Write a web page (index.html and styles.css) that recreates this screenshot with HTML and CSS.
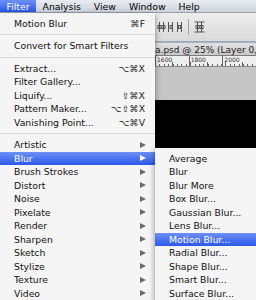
FILE: index.html
```html
<!DOCTYPE html>
<html lang="en">
<head>
    <meta charset="UTF-8">
    <meta name="viewport" content="width=device-width, initial-scale=1.0">
    <title>Filter menu</title>
    <link rel="stylesheet" href="styles.css">
</head>
<body>
    <div id="menubar">
        <span class="mb-item active">Filter</span>
        <span class="mb-item">Analysis</span>
        <span class="mb-item">View</span>
        <span class="mb-item">Window</span>
        <span class="mb-item">Help</span>
    </div>

    <div id="workspace">
        <div class="options-bar">
            <svg class="tool-icon" width="26" height="12" viewBox="0 0 26 12">
                <g stroke="#555" stroke-width="1" fill="none">
                    <line x1="2.5" y1="1" x2="2.5" y2="11"/>
                    <line x1="6.5" y1="1" x2="6.5" y2="11"/>
                    <rect x="1" y="4.5" width="3" height="3"/>
                    <rect x="5" y="4.5" width="3" height="3"/>
                    <line x1="11.5" y1="1" x2="11.5" y2="11"/>
                    <line x1="15.5" y1="1" x2="15.5" y2="11"/>
                    <rect x="13" y="4.5" width="2" height="3"/>
                    <line x1="20.5" y1="1" x2="20.5" y2="11"/>
                    <line x1="24.5" y1="1" x2="24.5" y2="11"/>
                    <rect x="21.5" y="4.5" width="2" height="3"/>
                </g>
            </svg>
            <span class="tool-sep"></span>
            <svg class="tool-icon" width="11" height="12" viewBox="0 0 11 12">
                <g stroke="#555" stroke-width="1" fill="none">
                    <line x1="0.5" y1="1" x2="10.5" y2="1"/>
                    <line x1="3.5" y1="1" x2="3.5" y2="11"/>
                    <line x1="7.5" y1="1" x2="7.5" y2="11"/>
                    <rect x="2" y="4.5" width="3" height="3"/>
                    <rect x="6" y="4.5" width="3" height="3"/>
                    <line x1="0.5" y1="11" x2="10.5" y2="11"/>
                </g>
            </svg>
        </div>
        <div class="doc-title"><span>a.psd @ 25% (Layer 0, R</span></div>
        <div class="ruler">
            <span class="ruler-mark">1600</span>
            <span class="ruler-mark">1800</span>
            <span class="ruler-mark">2000</span>
        </div>
        <div class="pasteboard"></div>
        <div class="canvas"></div>
    </div>

    <ul class="menu filter-menu">
        <li class="item"><span>Motion Blur</span><span class="key">⌘F</span></li>
        <li class="sep"></li>
        <li class="item"><span>Convert for Smart Filters</span></li>
        <li class="sep"></li>
        <li class="item"><span>Extract...</span><span class="key">⌥⌘X</span></li>
        <li class="item"><span>Filter Gallery...</span></li>
        <li class="item"><span>Liquify...</span><span class="key">⇧⌘X</span></li>
        <li class="item"><span>Pattern Maker...</span><span class="key">⌥⇧⌘X</span></li>
        <li class="item"><span>Vanishing Point...</span><span class="key">⌥⌘V</span></li>
        <li class="sep"></li>
        <li class="item sub"><span>Artistic</span><span class="arrow"></span></li>
        <li class="item sub selected"><span>Blur</span><span class="arrow"></span></li>
        <li class="item sub"><span>Brush Strokes</span><span class="arrow"></span></li>
        <li class="item sub"><span>Distort</span><span class="arrow"></span></li>
        <li class="item sub"><span>Noise</span><span class="arrow"></span></li>
        <li class="item sub"><span>Pixelate</span><span class="arrow"></span></li>
        <li class="item sub"><span>Render</span><span class="arrow"></span></li>
        <li class="item sub"><span>Sharpen</span><span class="arrow"></span></li>
        <li class="item sub"><span>Sketch</span><span class="arrow"></span></li>
        <li class="item sub"><span>Stylize</span><span class="arrow"></span></li>
        <li class="item sub"><span>Texture</span><span class="arrow"></span></li>
        <li class="item sub"><span>Video</span><span class="arrow"></span></li>
    </ul>

    <ul class="menu blur-menu">
        <li class="item"><span>Average</span></li>
        <li class="item"><span>Blur</span></li>
        <li class="item"><span>Blur More</span></li>
        <li class="item"><span>Box Blur...</span></li>
        <li class="item"><span>Gaussian Blur...</span></li>
        <li class="item"><span>Lens Blur...</span></li>
        <li class="item selected"><span>Motion Blur...</span></li>
        <li class="item"><span>Radial Blur...</span></li>
        <li class="item"><span>Shape Blur...</span></li>
        <li class="item"><span>Smart Blur...</span></li>
        <li class="item"><span>Surface Blur...</span></li>
    </ul>
</body>
</html>
```

FILE: styles.css
```css
body {
    margin: 0;
    width: 256px;
    height: 300px;
    overflow: hidden;
    position: relative;
    font-family: "DejaVu Sans", "Lucida Grande", sans-serif;
    font-size: 9.3px;
    color: #111;
    background: #c4c4c4;
}

#menubar {
    display: flex;
    height: 13px;
    line-height: 13px;
    background: linear-gradient(#e9ecf1, #cdd3db);
    border-bottom: 1px solid #9aa0a8;
    box-sizing: border-box;
}

.mb-item {
    padding: 0 6.5px;
    color: #000;
}

.mb-item.active {
    color: #fff;
    background: linear-gradient(#6d90f6, #2b58ea);
}

#workspace {
    display: flex;
    flex-direction: column;
}

.options-bar {
    height: 29px;
    display: flex;
    align-items: center;
    gap: 3px;
    padding-left: 157px;
    background: linear-gradient(#ededed, #d9d9d9);
    border-bottom: 1px solid #a8a8a8;
    box-sizing: border-box;
}

.tool-sep {
    width: 1px;
    height: 16px;
    background: #a0a0a0;
    margin: 0 2px;
}

.doc-title {
    height: 14px;
    line-height: 14px;
    padding-left: 155px;
    font-size: 9px;
    color: #222;
    white-space: nowrap;
    overflow: hidden;
    background: linear-gradient(#e2e2e2, #c9c9c9);
    border-top: 1px solid #9db3d6;
    border-bottom: 1px solid #7c7c7c;
    box-sizing: border-box;
}

.ruler {
    height: 11px;
    display: flex;
    padding-left: 155px;
    background:
        repeating-linear-gradient(to right, #666 0 1px, transparent 1px 4.4px) bottom / 100% 2px no-repeat,
        repeating-linear-gradient(to right, #666 0 1px, transparent 1px 17.5px) bottom / 100% 4px no-repeat,
        #efefef;
    background-position: 155px bottom, 155px bottom, 0 0;
    border-bottom: 1px solid #888;
    box-sizing: border-box;
}

.ruler-mark {
    width: 34px;
    font-size: 6px;
    line-height: 7px;
    padding-left: 1px;
    color: #333;
    border-left: 1px solid #666;
    height: 10px;
    box-sizing: border-box;
}

.pasteboard {
    height: 33px;
    background: #c6c6c6;
}

.canvas {
    height: 60px;
    background: #000;
}

.menu {
    position: absolute;
    margin: 0;
    list-style: none;
    background: #f5f5f5;
    box-shadow: 0 2px 6px rgba(0, 0, 0, 0.45);
}

.filter-menu {
    left: 0;
    top: 13px;
    width: 155px;
    padding: 3.5px 0 10px;
    box-sizing: border-box;
}

.blur-menu {
    left: 155px;
    top: 148px;
    width: 101px;
    padding: 3.5px 0 10px;
    box-sizing: border-box;
}

.item {
    display: flex;
    justify-content: space-between;
    align-items: center;
    height: 13.5px;
    padding: 0 10px 0 14px;
    white-space: nowrap;
}

.item.sub {
    padding-right: 9px;
}

.item.selected {
    color: #fff;
    background: linear-gradient(#6d90f6, #2b58ea);
}

.key {
    color: #222;
}

.arrow {
    width: 0;
    height: 0;
    border-left: 6px solid #6a6a6a;
    border-top: 3.5px solid transparent;
    border-bottom: 3.5px solid transparent;
}

.selected .arrow {
    border-left-color: #fff;
}

.sep {
    height: 9px;
    display: flex;
    align-items: center;
}

.sep::before {
    content: "";
    flex: 1;
    height: 1px;
    background: #d9d9d9;
}
```
